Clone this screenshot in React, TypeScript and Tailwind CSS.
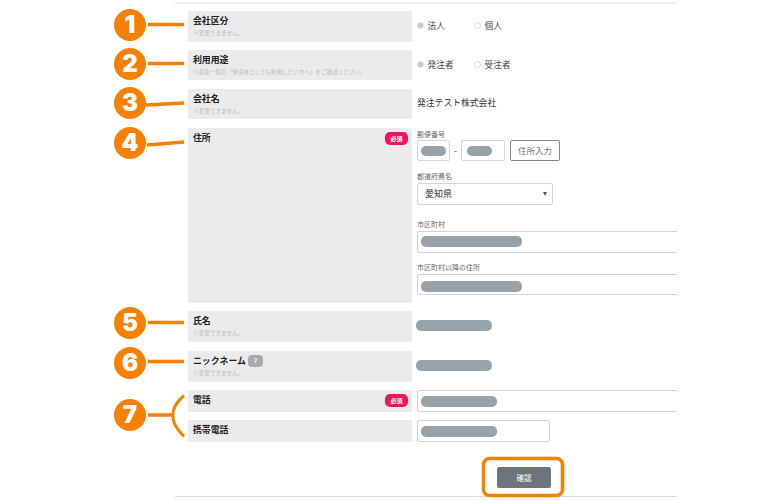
import React from 'react';

const JP = "font-['Noto_Sans_CJK_JP','Noto_Sans',sans-serif]";

function Required() {
  return (
    <span className="absolute right-[4px] top-[4px] flex h-[13px] w-[23px] items-center justify-center rounded-[5px] bg-[#f0145a] text-[6px] font-bold leading-none text-white">
      必須
    </span>
  );
}

function Masked({ w, h = 11 }: { w: number; h?: number }) {
  return <div className="rounded-[5px] bg-[#97a2a9]" style={{ width: w, height: h }} />;
}

function Head({ label, note, required, help }: { label: string; note?: string; required?: boolean; help?: boolean }) {
  return (
    <div className="relative h-full w-[224px] shrink-0 rounded-[2px] bg-[#ebebeb] pl-[5px] pt-[3px]">
      <div className="flex items-center gap-[2px] text-[8.9px] font-bold leading-[14px] text-[#222]">
        {label}
        {help && (
          <span className="flex h-[12px] w-[15px] items-center justify-center rounded-[4px] bg-[#aaaaaa] text-[6px] text-white">?</span>
        )}
      </div>
      {note && <div className="mt-[1px] text-[5.6px] leading-[8px] text-[#bbbbbb]">{note}</div>}
      {required && <Required />}
    </div>
  );
}

function Radio({ label, on }: { label: string; on?: boolean }) {
  return (
    <label className="flex w-[57px] items-center gap-[3.5px] text-[8.7px] text-[#444]">
      <span className="flex h-[7px] w-[7px] items-center justify-center rounded-full border border-[#d8d8d8] bg-white">
        {on && <span className="h-[5px] w-[5px] rounded-full bg-[#c8c8c8]" />}
      </span>
      {label}
    </label>
  );
}

function Row({ h, mb, children }: { h: number; mb: number; children: React.ReactNode }) {
  return (
    <div className="flex gap-[5px] pl-[13px]" style={{ height: h, marginBottom: mb }}>
      {children}
    </div>
  );
}

function Line({ x1, y1, x2, y2 }: { x1: number; y1: number; x2: number; y2: number }) {
  return <line x1={x1} y1={y1} x2={x2} y2={y2} stroke="#f88000" strokeWidth="3.5" />;
}

const badges = [
  { n: 1, x: 114, y: 9 },
  { n: 2, x: 114, y: 48 },
  { n: 3, x: 114, y: 87 },
  { n: 4, x: 114, y: 127 },
  { n: 5, x: 114, y: 307 },
  { n: 6, x: 114, y: 346.5 },
  { n: 7, x: 114, y: 399 },
];

const fieldCaption = 'text-[7px] leading-[10px] text-[#666]';
const inputBox = 'shrink-0 border border-[#ced4da] bg-white rounded-[2px]';

export default function App() {
  return (
    <div className={`relative h-[500px] w-[770px] overflow-hidden bg-white ${JP}`}>
      <div className="ml-[175px] h-[497px] w-[502px] overflow-hidden border-b border-[#dddddd]">
        <div className="mt-[2px] h-[2px] bg-[#efefef]" />
        <div className="pt-[7px]">
          <Row h={31} mb={8}>
            <Head label="会社区分" note="※変更できません。" />
            <div className="flex items-center pb-[2px]">
              <Radio label="法人" on />
              <Radio label="個人" />
            </div>
          </Row>
          <Row h={30} mb={9}>
            <Head label="利用用途" note="※設定一覧の「受注者としても利用したい方へ」をご確認ください。" />
            <div className="flex items-center pb-[1px]">
              <Radio label="発注者" on />
              <Radio label="受注者" />
            </div>
          </Row>
          <Row h={30} mb={9}>
            <Head label="会社名" note="※変更できません。" />
            <div className="flex items-center pb-[2px] text-[8.8px] text-[#333]">発注テスト株式会社</div>
          </Row>
          <Row h={175} mb={8}>
            <Head label="住所" required />
            <div className="min-w-0 flex-1 overflow-hidden">
              <div className={`${fieldCaption} pt-[1px]`}>郵便番号</div>
              <div className="mt-[1px] flex items-center">
                <div className={`${inputBox} flex h-[21px] w-[33px] items-center pl-[3px]`}><Masked w={25} h={10} /></div>
                <span className="w-[11px] text-center text-[9px] text-[#555]">-</span>
                <div className={`${inputBox} flex h-[21px] w-[44px] items-center pl-[5px]`}><Masked w={25} h={10} /></div>
                <button className="ml-[5px] h-[21px] w-[50px] rounded-[2px] border border-[#7c868c] text-[8.5px] text-[#6c757d]">住所入力</button>
              </div>
              <div className={`${fieldCaption} mt-[10px]`}>都道府県名</div>
              <div className={`${inputBox} mt-[2px] flex h-[22px] w-[136px] items-center justify-between pl-[7px] pr-[5px] text-[9px] text-[#333]`}>
                愛知県
                <span className="h-0 w-0 border-x-[2.5px] border-t-[4px] border-x-transparent border-t-[#555]" />
              </div>
              <div className={`${fieldCaption} mt-[14px]`}>市区町村</div>
              <div className={`${inputBox} mt-[2px] flex h-[22px] w-[300px] items-end pb-[5px] pl-[3px]`}><Masked w={101} /></div>
              <div className={`${fieldCaption} mt-[9px]`}>市区町村以降の住所</div>
              <div className={`${inputBox} mt-[2px] flex h-[21px] w-[300px] items-end pb-[2px] pl-[3px]`}><Masked w={101} /></div>
            </div>
          </Row>
          <Row h={31} mb={9}>
            <Head label="氏名" note="※変更できません。" />
            <div className="-ml-[1px] flex items-center pb-[3px]"><Masked w={76} /></div>
          </Row>
          <Row h={31} mb={8}>
            <Head label="ニックネーム" note="※変更できません。" help />
            <div className="-ml-[1px] flex items-center pb-[3px]"><Masked w={76} /></div>
          </Row>
          <Row h={22} mb={8}>
            <Head label="電話" required />
            <div className={`${inputBox} flex h-full w-[300px] items-center pl-[3px]`}><Masked w={76} /></div>
          </Row>
          <Row h={22} mb={0}>
            <Head label="携帯電話" />
            <div className={`${inputBox} flex h-full w-[133px] items-center pl-[3px]`}><Masked w={76} /></div>
          </Row>
          <div className="flex justify-center pl-[196px] pt-[25px]">
            <button className="h-[21px] w-[54px] rounded-[2px] bg-[#6c757d] text-[7.5px] text-white">確認</button>
          </div>
        </div>
      </div>

      {/* orange call-outs over the form */}
      <svg className="absolute left-0 top-0" width="770" height="500" fill="none">
        <Line x1={148} y1={24.5} x2={184} y2={24.5} />
        <Line x1={148} y1={63.5} x2={184} y2={63.5} />
        <Line x1={146} y1={105} x2={184} y2={103} />
        <Line x1={147} y1={145} x2={184} y2={142} />
        <Line x1={148} y1={322.5} x2={184} y2={322.5} />
        <Line x1={148} y1={361.5} x2={184} y2={361.5} />
        <Line x1={148} y1={415} x2={173} y2={415} />
        <path d="M184 395.5 Q161.5 415 184 436.5" stroke="#f88000" strokeWidth="3" />
        <rect x="483.5" y="458.5" width="79" height="37" rx="6" stroke="#f88000" strokeWidth="3.5" />
      </svg>
      {badges.map((b) => (
        <div
          key={b.n}
          className="absolute flex h-[32px] w-[32px] items-center justify-center rounded-full bg-[#f88000] font-['Inter',sans-serif] text-[24px] font-black leading-none text-white"
          style={{ left: b.x, top: b.y }}
        >
          {b.n}
        </div>
      ))}
    </div>
  );
}
